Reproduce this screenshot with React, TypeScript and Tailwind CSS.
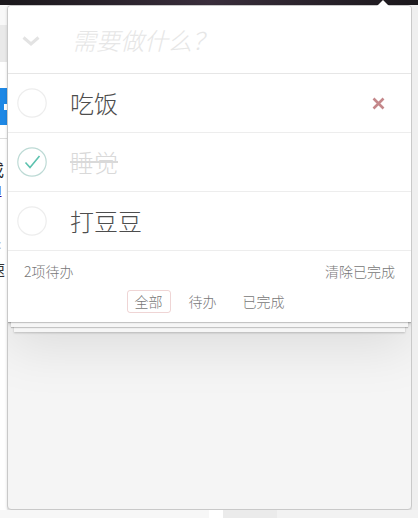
import React from "react";

/* Todo list popup (TodoMVC style) opened over a page. */

const cjk = "font-['Noto_Sans_CJK_SC','Noto_Sans',sans-serif]";

type Todo = { id: number; title: string; done: boolean };

const todos: Todo[] = [
  { id: 1, title: "吃饭", done: false },
  { id: 2, title: "睡觉", done: true },
  { id: 3, title: "打豆豆", done: false },
];

function Toggle({ done }: { done: boolean }) {
  return (
    <svg width="30" height="30" viewBox="0 0 30 30" className="shrink-0">
      <circle cx="15" cy="15" r="14.2" fill="none" stroke={done ? "#bddad5" : "#ededed"} strokeWidth="1.2" />
      {done ? (
        <path d="M8.5 15.5 L13 20.5 L22.5 9" fill="none" stroke="#5dc2af" strokeWidth="1.6" />
      ) : null}
    </svg>
  );
}

function TodoRow({ todo, first }: { todo: Todo; first: boolean }) {
  return (
    <li className="flex h-[59px] items-center border-b border-[#ededed] pl-[9px] pr-[26px]">
      <Toggle done={todo.done} />
      <span
        className={
          todo.done
            ? "ml-[23px] flex-1 text-[24px] font-light leading-none text-[#d9d9d9] line-through"
            : "ml-[23px] flex-1 text-[24px] font-light leading-none text-[#4d4d4d]"
        }
      >
        {todo.title}
      </span>
      {first ? (
        <svg width="13" height="13" viewBox="0 0 13 13">
          <path d="M1.5 1.5 L11.5 11.5 M11.5 1.5 L1.5 11.5" stroke="#c4878a" strokeWidth="2.6" />
        </svg>
      ) : null}
    </li>
  );
}

function LeftStrip() {
  return (
    <div className={`flex w-[7px] flex-col overflow-hidden bg-white ${cjk}`}>
      <div className="h-[20px] bg-[#f8f8f8]" />
      <div className="h-[37px] bg-[#e9e9e9]" />
      <div className="h-[26px]" />
      <div className="flex h-[37px] items-center justify-end bg-[#1e88e5]">
        <div className="h-[6px] w-[3px] bg-white" />
      </div>
      <div className="h-[14px] border-b border-[#dddddd]" />
      <div className="mt-[22px] ml-[-12px] text-[16px] leading-[16px] text-[#222]">或</div>
      <div className="mt-[6px] ml-[-2px] text-[12px] leading-[14px] text-[#1a0dab] underline">I</div>
      <div className="mt-[40px] ml-[-5px] text-[12px] leading-[14px] text-[#888]">c</div>
      <div className="mt-[10px] ml-[-11px] text-[16px] leading-[16px] text-[#333]">速</div>
    </div>
  );
}

export default function App() {
  const left = todos.filter((t) => !t.done).length;

  return (
    <div className={`relative flex h-[518px] w-[418px] flex-col overflow-hidden bg-[#f4f4f4] ${cjk}`}>
      <div className="h-[5px] bg-gradient-to-r from-[#1b181c] via-[#3a2e3c] to-[#1b181c]" />

      {/* popup arrow */}
      <div className="absolute left-[377px] top-0 h-0 w-0 border-x-[6px] border-b-[6px] border-x-transparent border-b-white" />

      <div className="flex h-[505px]">
        <LeftStrip />

        <div className="flex w-[405px] flex-col overflow-hidden rounded-[4px] border border-[#c9c9c9] bg-[#f5f5f5] shadow-[0_1px_3px_rgba(0,0,0,0.15)]">
          <section className="relative bg-white shadow-[0_2px_4px_0_rgba(0,0,0,0.2),0_25px_50px_0_rgba(0,0,0,0.1)]">
            <header className="flex h-[68px] items-center border-b border-[#e6e6e6]">
              <svg width="18" height="10" viewBox="0 0 18 10" className="ml-[14px] mt-[2px]">
                <path d="M1.5 1.5 L9 8 L16.5 1.5" fill="none" stroke="#e3e3e3" strokeWidth="3" />
              </svg>
              <input
                className="ml-[32px] w-[300px] bg-transparent text-[24px] font-light text-[#4d4d4d] outline-none placeholder:italic placeholder:text-[#e6e6e6]"
                placeholder="需要做什么？"
              />
            </header>

            <ul>
              {todos.map((t, i) => (
                <TodoRow key={t.id} todo={t} first={i === 0} />
              ))}
            </ul>

            <footer className="relative h-[71px] px-[16px] pt-[10px] text-[14px] font-light text-[#777] before:absolute before:inset-x-0 before:bottom-0 before:h-[50px] before:content-[''] before:shadow-[0_1px_1px_rgba(0,0,0,0.2),0_8px_0_-3px_#f6f6f6,0_9px_1px_-3px_rgba(0,0,0,0.2),0_16px_0_-6px_#f6f6f6,0_17px_2px_-6px_rgba(0,0,0,0.2)]">
              <div className="relative flex h-[20px] items-center justify-between">
                <span>{left}项待办</span>
                <span>清除已完成</span>
              </div>
              <div className="relative mt-[9px] flex justify-center gap-[10px]">
                <span className="rounded-[3px] border border-[rgba(175,47,47,0.2)] px-[7px] py-[2px] leading-[17px]">全部</span>
                <span className="rounded-[3px] border border-transparent px-[7px] py-[2px] leading-[17px]">待办</span>
                <span className="rounded-[3px] border border-transparent px-[7px] py-[2px] leading-[17px]">已完成</span>
              </div>
            </footer>
          </section>
        </div>

        <div className="w-[6px] bg-[#efefef]" />
      </div>

      <div className="flex h-[8px]">
        <div className="w-[209px] bg-[#f7f7f7]" />
        <div className="w-[14px] bg-white" />
        <div className="w-[54px] bg-[#ebebeb]" />
        <div className="flex-1 bg-[#f2f2f2]" />
      </div>
    </div>
  );
}
